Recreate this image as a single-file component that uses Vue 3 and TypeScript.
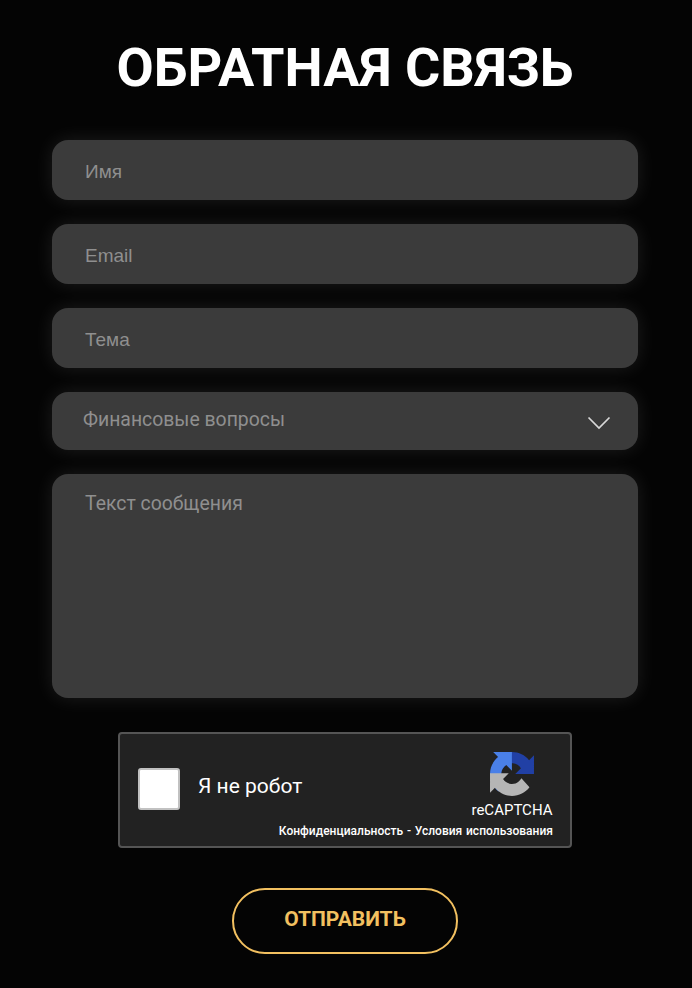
<script setup lang="ts">
const fields: string[] = ['Имя', 'Email', 'Тема']
</script>

<template>
  <main class="page">
    <h1 class="title">ОБРАТНАЯ СВЯЗЬ</h1>
    <form class="form" @submit.prevent>
      <input v-for="f in fields" :key="f" class="input" type="text" :placeholder="f" />
      <div class="select">
        <span>Финансовые вопросы</span>
        <svg class="chev" width="24" height="14" viewBox="0 0 24 14" fill="none">
          <path d="M1.5 1.5 L12 12 L22.5 1.5" stroke="#d8d8d8" stroke-width="1.7" />
        </svg>
      </div>
      <textarea class="area" placeholder="Текст сообщения"></textarea>
    </form>
    <div class="captcha">
      <div class="check"></div>
      <span class="robot">Я не робот</span>
      <div class="brand">
        <svg width="44" height="44" viewBox="0 0 64 64">
          <path d="M64 31.955l-.033-1.37V4.687l-7.16 7.16C50.948 4.674 42.033.093 32.05.093c-10.4 0-19.622 4.96-25.458 12.64l11.736 11.86a15.55 15.55 0 0 1 4.754-5.334c2.05-1.6 4.952-2.906 8.968-2.906.485 0 .86.057 1.135.163 4.976.393 9.288 3.14 11.828 7.124l-8.307 8.307c10.522-.04 22.4-.066 27.295.001" fill="#2140a5" />
          <path d="M31.9.002l-1.37.033H4.63l7.16 7.16C4.617 13.055.035 21.97.035 31.954c0 10.4 4.96 19.622 12.64 25.458l11.86-11.736a15.55 15.55 0 0 1-5.334-4.754c-1.6-2.05-2.906-4.952-2.906-8.968 0-.485.057-.86.163-1.135.393-4.976 3.14-9.288 7.124-11.828l8.307 8.307c-.04-10.522-.066-22.4.001-27.295" fill="#4a80e8" />
          <path d="M.002 32l.033 1.37v25.898l7.16-7.16c5.86 7.173 14.774 11.754 24.76 11.754 10.4 0 19.622-4.96 25.458-12.64L45.677 38.362a15.55 15.55 0 0 1-4.754 5.334c-2.05 1.6-4.952 2.906-8.968 2.906-.485 0-.86-.057-1.135-.163-4.976-.393-9.288-3.14-11.828-7.124l8.307-8.307c-10.522.04-22.4.066-27.295-.001" fill="#b5b5b5" />
        </svg>
        <span class="rc">reCAPTCHA</span>
      </div>
      <div class="terms">Конфиденциальность - Условия использования</div>
    </div>
    <button class="send" type="button">ОТПРАВИТЬ</button>
  </main>
</template>

<style>
html, body { margin: 0; background: #040404; }
</style>

<style scoped>
.page {
  width: 692px;
  height: 988px;
  box-sizing: border-box;
  padding-top: 36px;
  background: #040404;
  display: flex;
  flex-direction: column;
  align-items: center;
  overflow: hidden;
}
.title {
  margin: 0 0 0 -2px;
  font: 700 54px/64px Roboto, sans-serif;
  color: #fff;
}
.form {
  margin-top: 40px;
  margin-left: -2px;
  width: 586px;
  display: flex;
  flex-direction: column;
  gap: 24px;
}
.input, .select, .area {
  display: block;
  width: 100%;
  box-sizing: border-box;
  border: 0;
  outline: 0;
  border-radius: 16px;
  background: #3b3b3b;
  box-shadow: 0 0 20px rgba(255, 255, 255, 0.1);
  color: #8f8f8f;
}
.input {
  height: 60px;
  padding: 3px 33px 0;
  font: 19px "Liberation Sans", Arial, sans-serif;
}
.input::placeholder, .area::placeholder { color: #8f8f8f; opacity: 1; }
.select {
  height: 58px;
  padding: 0 27px 0 31px;
  display: flex;
  align-items: center;
  justify-content: space-between;
  font: 19.4px/28px Roboto, sans-serif;
}
.select span { margin-top: -3px; }
.chev { margin-top: 3px; }
.area {
  height: 224px;
  padding: 18px 33px;
  resize: none;
  font: 19.4px/24px Roboto, sans-serif;
}
.captcha {
  position: relative;
  margin-top: 34px;
  margin-left: -2px;
  width: 454px;
  height: 116px;
  box-sizing: border-box;
  border: 2px solid #555;
  border-radius: 4px;
  background: #222;
}
.check {
  position: absolute;
  left: 18px;
  top: 34px;
  width: 42px;
  height: 42px;
  box-sizing: border-box;
  background: #fff;
  border: 2px solid #c1c1c1;
  border-radius: 3px;
}
.robot {
  position: absolute;
  left: 78px;
  top: 39px;
  font: 21px/26px Roboto, sans-serif;
  color: #fff;
}
.brand {
  position: absolute;
  right: 16px;
  top: 18px;
  display: flex;
  flex-direction: column;
  align-items: center;
  width: 84px;
}
.rc {
  margin-top: 5px;
  font: 15px/18px Roboto, sans-serif;
  color: #fff;
}
.terms {
  position: absolute;
  right: 17px;
  top: 90px;
  font: 500 12px/14px Roboto, sans-serif;
  letter-spacing: 0.02px;
  word-spacing: 0.7px;
  color: #fff;
  white-space: nowrap;
}
.send {
  margin-top: 40px;
  margin-left: -2px;
  padding: 0 0 4px;
  width: 226px;
  height: 66px;
  box-sizing: border-box;
  background: transparent;
  border: 2px solid #f2c060;
  border-radius: 33px;
  color: #f2c060;
  font: 700 21px/24px Roboto, sans-serif;
}
</style>
